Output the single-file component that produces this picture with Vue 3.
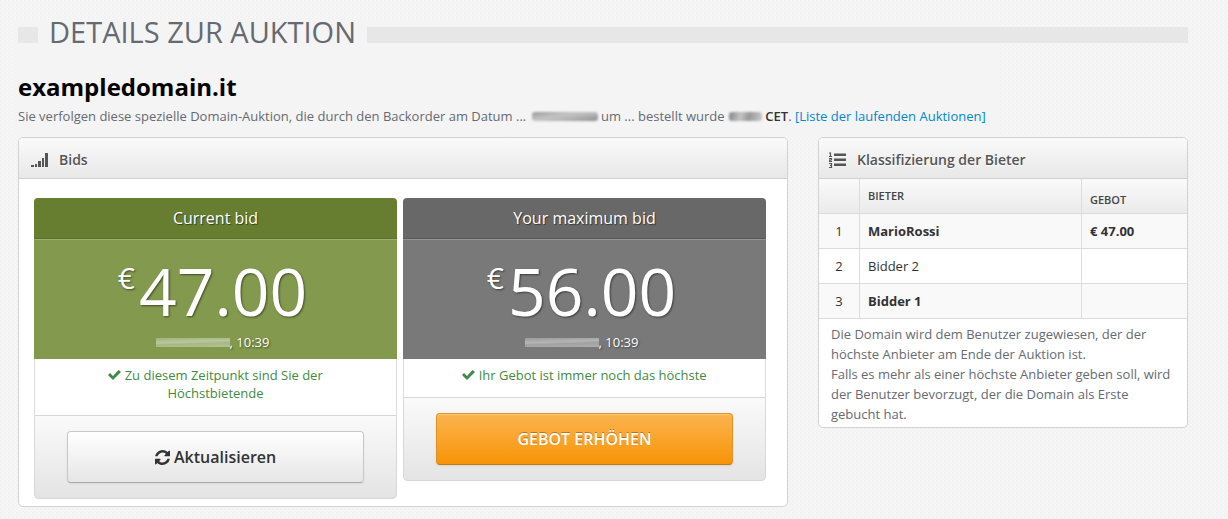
<script setup>
const bidders = [
  { rank: 1, name: 'MarioRossi', bid: '€ 47.00', strong: true },
  { rank: 2, name: 'Bidder 2', bid: '', strong: false },
  { rank: 3, name: 'Bidder 1', bid: '', strong: true },
]
</script>

<template>
  <main class="page">
    <header class="intro">
      <h1 class="title"><span>DETAILS ZUR AUKTION</span></h1>
      <h2 class="domain">exampledomain.it</h2>
      <p class="lead">
        Sie verfolgen diese spezielle Domain-Auktion, die durch den Backorder am Datum ...
        <span class="smudge date"></span> um ... bestellt wurde
        <span class="smudge hour"></span> <b>CET</b>.
        <a href="#">[Liste der laufenden Auktionen]</a>
      </p>
    </header>

    <div class="columns">
      <section class="panel">
        <h3 class="panel-head">
          <svg class="icon" viewBox="0 0 18 16" width="18" height="16" aria-hidden="true">
            <path fill="#555" d="M0 13h3v2H0zM4 12h2v3H4zM7 9h3v6H7zM11 6h2v9h-2zM14 1h3v14h-3z" />
          </svg>
          Bids
        </h3>
        <div class="bids">
          <article class="card green">
            <h4>Current bid</h4>
            <div class="price">
              <p class="amount"><sup>€</sup>47.00</p>
              <p class="time"><span class="smudge stamp"></span>, 10:39</p>
            </div>
            <p class="status">
              <svg class="check" viewBox="0 0 13 10" width="13" height="10" aria-hidden="true">
                <path fill="#3f8a45" d="M0 5l2-2 3 3 5.500-6L13 2 5 10z" />
              </svg>
              Zu diesem Zeitpunkt sind Sie der Höchstbietende
            </p>
            <div class="action">
              <button type="button" class="btn">
                <svg class="refresh" viewBox="0 0 1536 1536" width="15" height="15" aria-hidden="true">
                  <path fill="#333" d="M1511 928q0 5-1 7-64 268-268 434.500T764 1536q-146 0-282.500-55T238 1324l-129 129q-19 19-45 19t-45-19-19-45V960q0-26 19-45t45-19h448q26 0 45 19t19 45-19 45l-137 137q71 66 161 102t187 36q134 0 250-65t186-179q11-17 53-117 8-23 30-23h192q13 0 22.500 9.500T1511 928zM1536 128v448q0 26-19 45t-45 19h-448q-26 0-45-19t-19-45 19-45l138-138Q969 256 768 256q-134 0-250 65T332 500q-11 17-53 117-8 23-30 23H50q-13 0-22.500-9.500T18 608v-7q65-268 270-434.500T768 0q146 0 284 55.500T1297 212l130-129q19-19 45-19t45 19 19 45z" />
                </svg>
                Aktualisieren
              </button>
            </div>
          </article>

          <article class="card gray">
            <h4>Your maximum bid</h4>
            <div class="price">
              <p class="amount"><sup>€</sup>56.00</p>
              <p class="time"><span class="smudge stamp"></span>, 10:39</p>
            </div>
            <p class="status">
              <svg class="check" viewBox="0 0 13 10" width="13" height="10" aria-hidden="true">
                <path fill="#3f8a45" d="M0 5l2-2 3 3 5.500-6L13 2 5 10z" />
              </svg>
              Ihr Gebot ist immer noch das höchste
            </p>
            <div class="action">
              <button type="button" class="btn orange">GEBOT ERHÖHEN</button>
            </div>
          </article>
        </div>
      </section>

      <section class="panel ranking">
        <h3 class="panel-head">
          <svg class="icon" viewBox="0 0 18 16" width="18" height="16" aria-hidden="true">
            <path fill="#555" d="M5 1.500h12V4H5zM5 6.500h12V9H5zM5 11.500h12V14H5z" />
            <path fill="none" stroke="#555" stroke-width="1.2" d="M0 1h1.500v4M0 4.500h3M0 6.500h2.500v1.500H.5v1.500H3M0 11.500h2.500v4H0M1 13.500h2" />
          </svg>
          Klassifizierung der Bieter
        </h3>
        <table>
          <thead>
            <tr>
              <th class="rank"></th>
              <th>BIETER</th>
              <th class="bid">GEBOT</th>
            </tr>
          </thead>
          <tbody>
            <tr v-for="b in bidders" :key="b.rank">
              <td class="rank">{{ b.rank }}</td>
              <td :class="{ strong: b.strong }">{{ b.name }}</td>
              <td class="bid strong">{{ b.bid }}</td>
            </tr>
          </tbody>
        </table>
        <p class="note">
          Die Domain wird dem Benutzer zugewiesen, der der höchste Anbieter am Ende der Auktion ist.<br />
          Falls es mehr als einer höchste Anbieter geben soll, wird der Benutzer bevorzugt, der die Domain als Erste gebucht hat.
        </p>
      </section>
    </div>
  </main>
</template>

<style>
body {
  background-color: #f5f5f5;
  background-image:
    radial-gradient(circle at 1px 1px, #ececec 0, transparent 1px),
    radial-gradient(circle at 3px 3px, #eeeeee 0, transparent 1px),
    radial-gradient(circle at 3px 1px, #fafafa 0, transparent 1px);
  background-size: 4px 4px;
}
</style>

<style scoped>
.page {
  box-sizing: border-box;
  padding: 18px 40px 12px 12px;
  font: 13px/20px "Open Sans", "Noto Sans", sans-serif;
  color: #666a73;
}
h1, h2, h3, h4, p { margin: 0; font-weight: 400; }
.intro {
  padding-left: 6px;
  background: linear-gradient(#f4f4f4, #f4f4f4) no-repeat 0 0 / 84% 100%;
}
.title {
  display: flex;
  align-items: center;
  gap: 11px;
  font-size: 29px;
  line-height: 28px;
  color: #666a70;
}
.title::before,
.title::after {
  content: "";
  height: 16px;
  margin-top: 6px;
  background: #e7e7e7;
}
.title::before { width: 20px; }
.title::after { flex: 1; }
.domain {
  margin-top: 26px;
  font-size: 24px;
  line-height: 30px;
  font-weight: 700;
  color: #000;
}
.lead { padding: 4px 0 11px; }
.lead b { color: #333; font-weight: 600; }
a { color: #0088cc; text-decoration: none; }
.smudge {
  display: inline-block;
  height: 9px;
  border-radius: 3px;
}
.date {
  width: 66px;
  margin-left: 2px;
  background: linear-gradient(170deg, #999, #c4c4c4 40%, #b4b4b4 65%, #8c8c8c);
  filter: blur(1px);
}
.hour {
  width: 33px;
  margin-left: 1px;
  background: linear-gradient(100deg, #858585, #c4c4c4 35%, #999 60%, #c9c9c9);
  filter: blur(1px);
}
.stamp {
  width: 74px;
  border-radius: 0;
  background: linear-gradient(178deg, rgba(255, 255, 255, .25), rgba(255, 255, 255, .45) 45%, rgba(255, 255, 255, .3) 60%, rgba(255, 255, 255, .4));
}
.columns {
  display: grid;
  grid-template-columns: 77fr 37fr;
  gap: 30px;
  align-items: start;
  margin-left: 6px;
}
.panel {
  overflow: hidden;
  border: 1px solid #d2d2d2;
  border-radius: 5px;
  background: #fff;
}
.panel-head {
  display: flex;
  align-items: center;
  gap: 10px;
  padding: 12px 12px 8px;
  border-bottom: 1px solid #d2d2d2;
  background: linear-gradient(#fafafa, #e8e8e8);
  font-size: 14px;
  line-height: 20px;
  font-weight: 600;
  color: #555;
  text-shadow: 0 1px 0 #fff;
}
.ranking .panel-head { padding-left: 10px; }
.bids {
  display: grid;
  grid-template-columns: 1fr 1fr;
  gap: 6px;
  align-items: start;
  padding: 19px 21px 7px 15px;
}
.card {
  overflow: hidden;
  border-radius: 4px;
  text-align: center;
}
.card h4 {
  font-size: 16px;
  line-height: 40px;
  color: #fff;
  text-shadow: 1px 1px 1px rgba(0, 0, 0, .5);
}
.green h4 { background: #677e30; border-bottom: 1px solid #5a702a; }
.green .price { background: #82994e; border-top: 1px solid #9bb06c; }
.gray h4 { background: #686868; border-bottom: 1px solid #5a5a5a; }
.gray .price { background: #797979; border-top: 1px solid #949494; }
.price {
  padding: 16px 6px 7px 0;
  color: #fff;
  text-shadow: 1px 1px 2px rgba(0, 0, 0, .5);
}
.amount {
  display: flex;
  justify-content: center;
  gap: 4px;
  font-size: 66px;
  line-height: 68px;
}
.amount sup {
  font-size: 30px;
  line-height: 44px;
}
.time { padding-top: 8px; }
.status {
  padding: 7px 48px 13px;
  border: solid #dcdcdc;
  border-width: 0 1px;
  line-height: 18px;
  color: #3f8a45;
}
.action {
  padding: 15px 32px;
  border: 1px solid #d8d8d8;
  border-radius: 0 0 4px 4px;
  background: linear-gradient(#fafafa, #e4e4e4);
}
.btn {
  display: block;
  width: 100%;
  padding: 15px 0;
  border: 1px solid #c8c8c8;
  border-bottom-color: #aaa;
  border-radius: 4px;
  background: linear-gradient(#fff, #e6e6e6);
  box-shadow: 0 1px 2px rgba(0, 0, 0, .08);
  font: 600 16px/20px "Open Sans", "Noto Sans", sans-serif;
  color: #333;
}
.refresh { vertical-align: -2px; }
.orange {
  border-color: #dc9224;
  border-bottom-color: #c47a10;
  background: linear-gradient(#fbb450, #f89406);
  box-shadow: inset 0 1px 0 rgba(255, 255, 255, .25), 0 1px 2px rgba(0, 0, 0, .08);
  color: #fff;
  text-shadow: 0 -1px 0 rgba(0, 0, 0, .3);
}
table {
  width: 100%;
  border-collapse: separate;
  border-spacing: 0;
  table-layout: fixed;
  color: #333;
}
th, td {
  box-sizing: border-box;
  height: 35px;
  padding: 0 8px;
  border-bottom: 1px solid #dcdcdc;
  text-align: left;
}
th + th, td + td { border-left: 1px solid #dcdcdc; }
thead tr { background: linear-gradient(#fafafa, #eaeaea); }
th { font-size: 11px; font-weight: 600; color: #444; }
th.bid { padding-bottom: 3px; vertical-align: bottom; }
.rank { width: 40px; text-align: center; }
.bid { width: 106px; }
.strong { font-weight: 700; }
tbody tr:nth-child(odd) { background: #f9f9f9; }
.note { padding: 5px 12px 3px; }
</style>
